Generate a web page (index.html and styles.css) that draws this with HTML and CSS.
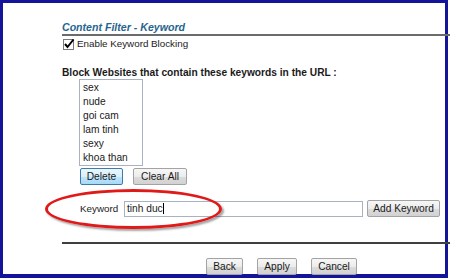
FILE: index.html
```html
<!DOCTYPE html>
<html>
   <head>
      <title>Content Filter - Keyword</title>
      <link rel="stylesheet" href="styles.css">
   </head>
   <body>
      <div class="frame">
         <h1 class="title">Content Filter - Keyword</h1>
         <div class="rule"></div>
         <label class="check-row">
            <svg class="checkbox" width="12" height="12" viewBox="0 0 12 12">
               <rect x="0.5" y="1.5" width="10" height="10" fill="#fff" stroke="#7a7a7a"/>
               <path d="M2 6 L4.5 9 L10.5 1.5" fill="none" stroke="#000" stroke-width="2"/>
            </svg>
            <span>Enable Keyword Blocking</span>
         </label>
         <div class="section-label">Block Websites that contain these keywords in the URL :</div>
         <div class="keyword-list">
            <div class="keyword-item">sex</div>
            <div class="keyword-item">nude</div>
            <div class="keyword-item">goi cam</div>
            <div class="keyword-item">lam tinh</div>
            <div class="keyword-item">sexy</div>
            <div class="keyword-item">khoa than</div>
         </div>
         <div class="list-actions">
            <button class="btn focused btn-delete">Delete</button>
            <button class="btn btn-clear">Clear All</button>
         </div>
         <div class="keyword-row">
            <span class="keyword-label">Keyword</span>
            <div class="keyword-input">tinh duc<span class="caret"></span></div>
            <button class="btn btn-add">Add Keyword</button>
         </div>
         <div class="rule dark"></div>
         <div class="form-actions">
            <button class="btn btn-back">Back</button>
            <button class="btn btn-apply">Apply</button>
            <button class="btn btn-cancel">Cancel</button>
         </div>
         <div class="highlight"></div>
      </div>
   </body>
</html>
```

FILE: styles.css
```css
         * {
         margin: 0;
         padding: 0;
         box-sizing: border-box;
         font-family: 'Liberation Sans', Arial, sans-serif;
         }
         body {
         width: 450px;
         height: 279px;
         overflow: hidden;
         background: #ffffff;
         color: #1a1a1a;
         }
         .frame {
         position: relative;
         width: 448px;
         height: 278px;
         border: 3px solid #14149a;
         border-bottom-width: 4px;
         padding: 17px 0 0 59px;
         }
         .title {
         font-size: 10.6px;
         line-height: 14px;
         font-weight: bold;
         font-style: italic;
         color: #26648f;
         }
         .rule {
         height: 2px;
         margin-right: -5px;
         background: #6b6b6b;
         }
         .rule.dark {
         margin-top: 25px;
         background: #3f3f3f;
         }
         .check-row {
         display: flex;
         align-items: center;
         gap: 2px;
         margin-top: 1px;
         padding-left: 1px;
         height: 13px;
         font-size: 9.8px;
         }
         .section-label {
         margin-top: 17px;
         font-size: 10.2px;
         line-height: 12px;
         font-weight: bold;
         }
         .keyword-list {
         width: 64px;
         height: 87px;
         margin-left: 17px;
         padding: 1px 0 0 3px;
         border: 1px solid #a7b3c2;
         font-size: 10.2px;
         }
         .keyword-item {
         height: 14px;
         line-height: 14px;
         }
         .list-actions {
         display: flex;
         gap: 10px;
         margin: 2px 0 0 18px;
         }
         .btn {
         height: 17px;
         padding: 0;
         font-size: 10.2px;
         color: #1a1a1a;
         border: 1px solid #a3a3a3;
         border-radius: 2px;
         background: linear-gradient(#f7f7f7, #ececec 50%, #dcdcdc 51%, #d2d2d2);
         }
         .btn.focused {
         border-color: #3d7bad;
         background: linear-gradient(#eaf6fd, #d9f0fc 50%, #bee6fd 51%, #a7d9f5);
         }
         .btn-delete { width: 43px; }
         .btn-clear { width: 54px; }
         .btn-add { width: 73px; }
         .btn-back { width: 37px; }
         .btn-apply { width: 40px; }
         .btn-cancel { width: 46px; }
         .keyword-row {
         display: flex;
         align-items: center;
         gap: 4px;
         margin: 15px 0 0 18px;
         height: 17px;
         font-size: 9.8px;
         }
         .keyword-label {
         width: 40px;
         }
         .keyword-input {
         width: 239px;
         height: 16px;
         line-height: 14px;
         padding-left: 2px;
         border: 1px solid #a7b3c2;
         font-size: 10.2px;
         }
         .caret {
         display: inline-block;
         width: 1px;
         height: 11px;
         vertical-align: -2px;
         background: #000000;
         }
         .form-actions {
         display: flex;
         gap: 14px;
         margin: 14px 0 0 144px;
         }
         .highlight {
         position: absolute;
         left: 42px;
         top: 186px;
         width: 177px;
         height: 40px;
         border: 3px solid #e01919;
         border-radius: 50%;
         box-shadow: 2px 2px 2px rgba(0, 0, 0, 0.35);
         }
```
